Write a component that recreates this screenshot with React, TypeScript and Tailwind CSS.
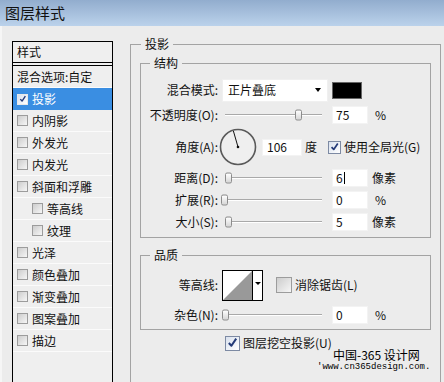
import React from 'react';

const Box: React.FC<{ checked?: boolean; className: string }> = ({ checked, className }) => (
    <span
        className={`inline-flex shrink-0 items-center justify-center border ${
            checked
                ? 'border-[#7d8aa3] bg-linear-to-br from-[#d9e1ee] to-white'
                : 'border-[#9c9c9c] bg-linear-to-br from-[#cdcdcd] to-[#f6f6f6]'
        } ${className}`}
    >
        {checked && (
            <svg viewBox="0 0 12 12" className="w-[85%] h-[85%]">
                <path d="M2 6.5 L4.8 9.5 L10 1.8" fill="none" stroke="#233a78" strokeWidth="2.2" strokeLinejoin="round" />
            </svg>
        )}
    </span>
);

const Slider: React.FC<{ left: number }> = ({ left }) => (
    <div className="relative w-[106px] h-full">
        <div className="absolute left-[3px] top-1/2 w-[97px] h-[2px] -translate-y-1/2 border-t border-[#a9a9a9] bg-white" />
        <div
            className="absolute top-1/2 -translate-y-1/2 w-[7px] h-[11px] rounded-[2px] border border-[#8c8c8c] bg-linear-to-b from-white to-[#d6d6d6]"
            style={{ left }}
        />
    </div>
);

const Field: React.FC<{ value: string; caret?: boolean }> = ({ value, caret }) => (
    <div className="ml-[4px] w-[36px] h-[18px] bg-white border border-[#f3f3f3] pl-[3px] flex items-center text-[12px]">
        {value}
        {caret && <span className="ml-[1px] w-px h-[12px] bg-black" />}
    </div>
);

const Label: React.FC<{ children: React.ReactNode }> = ({ children }) => (
    <div className="w-[73px] shrink-0 text-right whitespace-nowrap">{children}</div>
);

const styles = [
    { name: '内阴影' },
    { name: '外发光' },
    { name: '内发光' },
    { name: '斜面和浮雕' },
    { name: '等高线', sub: true },
    { name: '纹理', sub: true },
    { name: '光泽' },
    { name: '颜色叠加' },
    { name: '渐变叠加' },
    { name: '图案叠加' },
    { name: '描边' },
];

export default function App() {
    return (
        <div className="relative w-[444px] h-[382px] overflow-hidden flex flex-col bg-[#ececec] text-[12px] leading-[16px] text-[#111] font-['Noto_Sans_CJK_SC',sans-serif]">
            {/* Title bar */}
            <div className="h-[26px] shrink-0 flex items-center px-[5px] text-[15px] bg-linear-to-b from-[#92adce] to-[#bbd2eb]">
                图层样式
            </div>

            <div className="flex flex-1 min-h-0 border-l-[2px] border-[#f6f6f6]">
                {/* Style list */}
                <div className="ml-[10px] mt-[15px] w-[101px] self-stretch border border-b-0 border-black bg-[#efefef] flex flex-col">
                    <div className="h-[24px] pl-[4px] flex items-center border-b-4 border-double border-black">样式</div>
                    <div className="h-[22px] pl-[4px] flex items-center border-b border-[#fbfbfb]">混合选项:自定</div>
                    <div className="h-[22px] pl-[4px] flex items-center gap-[4px] bg-[#3a8ee2] text-white">
                        <Box checked className="w-[11px] h-[11px] border-[#e8e8e8]" />
                        投影
                    </div>
                    {styles.map((s) => (
                        <div
                            key={s.name}
                            className={`h-[22px] flex items-center gap-[4px] border-b border-[#fbfbfb] ${s.sub ? 'pl-[19px]' : 'pl-[4px]'}`}
                        >
                            <Box className="w-[11px] h-[11px]" />
                            {s.name}
                        </div>
                    ))}
                </div>

                {/* Drop shadow settings */}
                <fieldset className="ml-[17px] mt-[10px] w-[311px] self-stretch border border-b-0 border-[#a3a3a3] px-[9px] pt-[3px]">
                    <legend className="ml-[1px] px-[4px]">投影</legend>

                    <fieldset className="border border-[#a3a3a3] px-[4px] pb-[4px]">
                        <legend className="ml-[5px] px-[4px]">结构</legend>

                        <div className="mt-[7px] h-[24px] flex items-center">
                            <Label>混合模式:</Label>
                            <div className="ml-[4px] w-[106px] h-[23px] bg-white border border-[#f0f0f0] pl-[5px] pr-[6px] flex items-center justify-between">
                                正片叠底
                                <span className="w-0 h-0 border-x-[3px] border-x-transparent border-t-[4px] border-t-black" />
                            </div>
                            <div className="ml-[4px] w-[30px] h-[17px] bg-black border border-[#666]" />
                        </div>

                        <div className="mt-[2px] h-[22px] flex items-center">
                            <Label>不透明度(O):</Label>
                            <div className="ml-[4px] h-full">
                                <Slider left={73} />
                            </div>
                            <Field value="75" />
                            <span className="ml-[7px]">%</span>
                        </div>

                        <div className="mt-[1px] h-[40px] flex items-center">
                            <Label>角度(A):</Label>
                            <svg width="40" height="40" viewBox="0 0 40 40" className="ml-[1px] shrink-0">
                                <circle cx="19" cy="20" r="17.5" fill="#efefef" stroke="#5a5a5a" strokeWidth="1.6" />
                                <line x1="19" y1="20" x2="14.4" y2="4" stroke="#111" strokeWidth="1" />
                                <circle cx="19" cy="20" r="1.3" fill="#111" />
                            </svg>
                            <div className="ml-[3px] w-[40px] h-[17px] bg-white border border-[#f3f3f3] pl-[4px] flex items-center">106</div>
                            <span className="ml-[3px]">度</span>
                            <Box checked className="ml-[11px] w-[13px] h-[13px]" />
                            <span className="ml-[3px] whitespace-nowrap">使用全局光(G)</span>
                        </div>

                        <div className="h-[22px] flex items-center">
                            <Label>距离(D):</Label>
                            <div className="ml-[4px] h-full">
                                <Slider left={3} />
                            </div>
                            <Field value="6" caret />
                            <span className="ml-[4px]">像素</span>
                        </div>

                        <div className="h-[22px] flex items-center">
                            <Label>扩展(R):</Label>
                            <div className="ml-[4px] h-full">
                                <Slider left={-1} />
                            </div>
                            <Field value="0" />
                            <span className="ml-[7px]">%</span>
                        </div>

                        <div className="h-[22px] flex items-center">
                            <Label>大小(S):</Label>
                            <div className="ml-[4px] h-full">
                                <Slider left={3} />
                            </div>
                            <Field value="5" />
                            <span className="ml-[4px]">像素</span>
                        </div>
                    </fieldset>

                    <fieldset className="mt-[9px] border border-[#a3a3a3] px-[4px] pb-[3px]">
                        <legend className="ml-[5px] px-[4px]">品质</legend>

                        <div className="mt-[6px] h-[32px] flex items-center">
                            <Label>等高线:</Label>
                            <div className="ml-[4px] w-[41px] h-[31px] border border-black bg-white flex">
                                <svg width="29" height="29" viewBox="0 0 29 29" className="shrink-0">
                                    <polygon points="0,29 29,0 29,29" fill="#999" />
                                </svg>
                                <div className="flex-1 border-l border-black flex justify-center pt-[11px]">
                                    <span className="w-0 h-0 border-x-[3px] border-x-transparent border-t-[3px] border-t-black" />
                                </div>
                            </div>
                            <Box className="ml-[13px] w-[16px] h-[16px]" />
                            <span className="ml-[3px] whitespace-nowrap">消除锯齿(L)</span>
                        </div>

                        <div className="mt-[3px] h-[22px] flex items-center">
                            <Label>杂色(N):</Label>
                            <div className="ml-[4px] h-full">
                                <Slider left={0} />
                            </div>
                            <Field value="0" />
                            <span className="ml-[7px]">%</span>
                        </div>
                    </fieldset>

                    <div className="mt-[2px] h-[22px] flex items-center pl-[85px]">
                        <Box checked className="w-[15px] h-[15px]" />
                        <span className="ml-[3px] whitespace-nowrap">图层挖空投影(U)</span>
                    </div>
                </fieldset>
            </div>

            {/* Watermark */}
            <div className="absolute left-[333px] top-[347px] text-[12px] leading-[16px] text-black">中国-365 设计网</div>
            <div className="absolute left-[317px] top-[361px] text-[9px] leading-[12px] text-black font-['Liberation_Mono',monospace]">
                'www.cn365design.com.
            </div>
        </div>
    );
}
